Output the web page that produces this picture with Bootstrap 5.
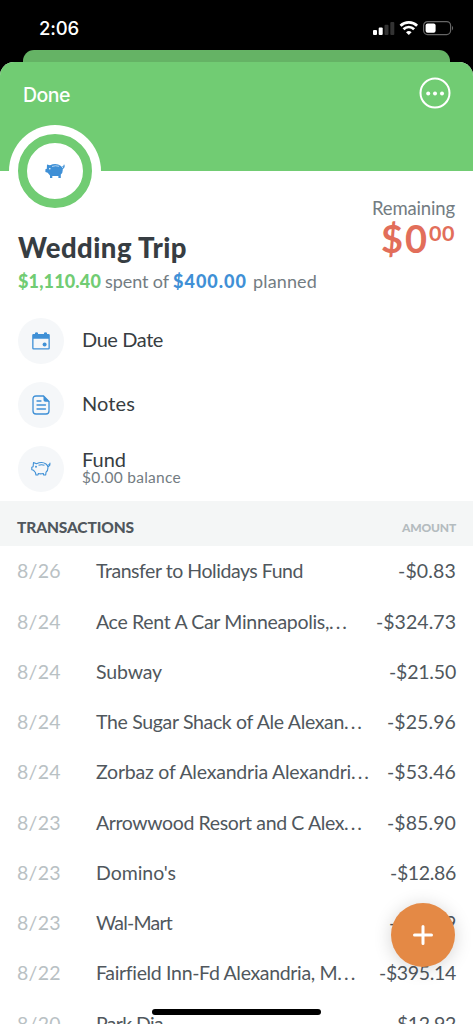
<!DOCTYPE html>
<html lang="en">
<head>
<meta charset="utf-8">
<meta name="viewport" content="width=device-width, initial-scale=1">
<title>Wedding Trip</title>
<link href="https://cdn.jsdelivr.net/npm/bootstrap@5.3.0/dist/css/bootstrap.min.css" rel="stylesheet">
<style>
html,body{height:1024px;overflow:hidden}
body{background:#000;font-family:Lato,"Open Sans",sans-serif;color:#373d42;line-height:1}
.phone{height:1024px;width:473px}
.status{height:50px;padding:7px 19px 0 39px;font-family:Inter,sans-serif;font-weight:500;font-size:18.5px}
.clock{margin-top:12px}
.signals{margin-top:13px}
.peek{height:12px;margin:0 23px;background:#65b365;border-radius:11px 11px 0 0}
.sheet{height:962px;border-radius:14px 14px 0 0}
.top{height:109px;background:#71cc73;padding:15px 22px 0 23px}
.done{font-family:Inter,sans-serif;font-weight:500;font-size:19.5px;line-height:36px}
.ring{width:92px;height:92px;margin:-46px 0 0 9px;background:#fff}
.ring>div{width:74px;height:74px;border:9px solid #71cc73}
.summary{height:84px;padding:0 18px 0 18px}
.title{font-size:27.5px;font-weight:900;line-height:30px;margin-top:16px;white-space:nowrap}
.sub{font-size:18px;line-height:24px;color:#737c82;margin-top:6px;white-space:nowrap}
.sub b{font-weight:900}
.sub .plan{margin-left:2px}
.grn{color:#71cc73}.blu{color:#3f90d6}
.remain{color:#737c82;font-size:18.5px;margin-top:-18px}
.zero{color:#e26e5a;font-weight:700;font-size:38px;line-height:38px;margin-top:1px}
.zero span{font-size:21.5px;line-height:22px;margin-top:3px}
.facts{height:200px;padding:17px 18px 0}
.fact{height:46px;margin-bottom:18px;font-size:20px}
.fact>.fit{margin-top:-4px}
.fund{margin-top:-5px}
.disc{width:46px;height:46px;background:#f5f7f9;margin-right:18px}
.fact small{font-size:15.5px;color:#737c82;line-height:16px}
.head{height:45px;background:#f4f6f6;padding:8px 17px 0;color:#50575d;font-weight:900;font-size:15.5px}
.head .amt{font-size:12px;font-weight:900;color:#b4bcbf;margin-top:1px}
.tx{height:50.25px;padding:0 17px;font-size:19.5px;color:#50575d;white-space:nowrap}
.tx .date{width:79px;color:#b9c1c4}
.fab{left:391px;top:903px;width:64px;height:64px;background:#e48945;box-shadow:0 2px 18px rgba(0,0,0,.17)}
.home{left:152px;top:1009px;width:169px;height:6px;background:#000}
.fit{display:inline-block}
</style>
</head>
<body>
<div class="phone position-relative overflow-hidden">
  <div class="status d-flex justify-content-between text-white">
    <div class="clock"><span class="fit" data-w="40">2:06</span></div>
    <svg class="signals" width="82" height="16" viewBox="0 0 82 16" fill="#fff">
      <rect x="1" y="10" width="4" height="5" rx="1"/><rect x="6.7" y="7.5" width="4" height="7.5" rx="1"/>
      <rect x="12.5" y="4.7" width="4" height="10.3" rx="1" fill="#333"/><rect x="18.3" y="2" width="4" height="13" rx="1" fill="#333"/>
      <g fill="none" stroke="#fff" stroke-width="2.7"><path d="M28.500 5.800a12 12 0 0 1 16.600 0"/><path d="M31.500 9.200a7.500 7.500 0 0 1 10.600 0"/></g>
      <path d="M34 12.200q2.800-2.200 5.600 0L36.800 15z"/>
      <rect x="51.6" y="1.6" width="27" height="13" rx="4" fill="none" stroke="#666" stroke-width="1.2"/><rect x="53.6" y="3.5" width="10" height="9.2" rx="2"/><path d="M80 5.800q2.300 2.300 0 4.600z" fill="#666"/>
    </svg>
  </div>
  <div class="peek"></div>
  <main class="sheet bg-white overflow-hidden">
    <header class="top d-flex justify-content-between text-white">
      <span class="done"><span class="fit" data-w="47">Done</span></span>
      <svg width="32" height="32" viewBox="0 0 32 32" fill="#fff"><circle cx="16" cy="16" r="14.5" fill="none" stroke="#fff" stroke-width="2"/><circle cx="9.2" cy="16.5" r="2"/><circle cx="16" cy="16.5" r="2"/><circle cx="23" cy="16.5" r="2"/></svg>
    </header>
    <div class="ring rounded-circle d-flex align-items-center justify-content-center">
      <div class="rounded-circle d-flex align-items-center justify-content-center">
        <svg width="20" height="16" viewBox="0 0 20 16"><path fill="#3f90d6" d="M2 1.500 5 2.300Q11-.6 16 3q1.500 1.200 1.700 3.300Q18 10 15.800 11.500V15h-2.400v-2H7.300v2H5v-2.500L2.700 9.800.4 9V6.300l1.400-.6z"/><path fill="none" stroke="#3f90d6" stroke-width="1.1" d="M17 6q3-1.500 1.800-4.200M17.400 3.500l2 .7"/><path fill="none" stroke="#fff" stroke-width=".6" d="M7 3.500q3.500-1.400 7-.2"/><circle cx="4.8" cy="5.7" r=".8" fill="#fff"/></svg>
      </div>
    </div>
    <section class="summary d-flex justify-content-between">
      <div>
        <h1 class="title mb-0"><span class="fit" data-w="169">Wedding Trip</span></h1>
        <div class="sub d-flex"><b class="grn fit me-1" data-w="83">$1,110.40</b><span class="fit" data-w="64">spent of</span><b class="blu fit mx-1" data-w="74">$400.00</b><span class="plan fit" data-w="64">planned</span></div>
      </div>
      <div class="remain d-flex flex-column align-items-end"><span class="fit" data-w="83">Remaining</span>
        <div class="zero d-flex"><div class="fit" data-w="48">$0</div><span class="fit" data-w="26">00</span></div>
      </div>
    </section>
    <section class="facts">
      <div class="fact d-flex align-items-center"><div class="disc rounded-circle d-flex align-items-center justify-content-center">
        <svg width="18" height="18" viewBox="0 0 18 18"><path fill="#3f90d6" fill-rule="evenodd" d="M1.500 2H3V.7Q4.500-.3 6 .7V2h6V.7q1.500-1 3 0V2h1.500q1.300 0 1.300 1.300v13q0 1.200-1.300 1.200h-15Q.2 17.500.2 16.300v-13Q.2 2 1.500 2m0 4.700v9.500h15V6.700z"/><circle cx="12.6" cy="12.5" r="2" fill="#3f90d6"/></svg></div><span class="fit" data-w="81">Due Date</span></div>
      <div class="fact d-flex align-items-center"><div class="disc rounded-circle d-flex align-items-center justify-content-center">
        <svg width="18" height="20" viewBox="0 0 18 20"><path d="M11.500 1H4Q1 1 1 4v12q0 3 3 3h10q3 0 3-3V6.500zM5 6h4M5 10h8.500M5 14h8.500" fill="none" stroke="#3f90d6" stroke-width="1.3" stroke-linecap="round"/><path d="M11.500.7V5q0 1.800 1.800 1.800h4.200z" fill="#3f90d6"/></svg></div><span class="fit" data-w="53">Notes</span></div>
      <div class="fact d-flex align-items-center"><div class="disc rounded-circle d-flex align-items-center justify-content-center">
        <svg width="20" height="16" viewBox="0 0 20 16" fill="none" stroke="#3f90d6" stroke-width="1.1" stroke-linejoin="round"><path d="m2.500 1.600 3 1.200Q11 .2 15 3q2 1.400 2 3.600 0 3.200-2 4.700l-.3 2.700h-2l-.4-1.500q-2.800.8-5 0L7 14H5l-.6-2.500L2.600 9.300.8 8.700V6.300l1.300-.5zM16.700 6q3-1.500 2-4.200M17.300 3.600l2 .6M7.500 4.200q3-1 6 0"/><circle cx="5" cy="5.8" r=".4"/></svg></div><div class="fund d-flex flex-column align-items-start"><span class="fit" data-w="44">Fund</span><small class="fit" data-w="99">$0.00 balance</small></div></div>
    </section>
    <div class="head d-flex justify-content-between align-items-center"><span class="fit" data-w="117">TRANSACTIONS</span><span class="amt fit" data-w="54">AMOUNT</span></div>
    <section id="rows"></section>
  </main>
  <button class="fab position-absolute border-0 rounded-circle p-0 d-flex align-items-center justify-content-center" aria-label="Add"><svg width="20" height="20" stroke="#fff" stroke-width="3" stroke-linecap="round"><path d="M10 1.500v17M1.500 10h17"/></svg></button>
  <div class="home position-absolute rounded-pill"></div>
</div>
<script src="https://cdn.jsdelivr.net/npm/bootstrap@5.3.0/dist/js/bootstrap.bundle.min.js"></script>
<script>
const rows=[["8/26","Transfer to Holidays Fund",207,"-$0.83",58],["8/24","Ace Rent A Car Minneapolis,...",253,"-$324.73",80],["8/24","Subway",66,"-$21.50",67],["8/24","The Sugar Shack of Ale Alexan...",268,"-$25.96",69],["8/24","Zorbaz of Alexandria Alexandri...",275,"-$53.46",69],["8/23","Arrowwood Resort and C Alex...",268,"-$85.90",69],["8/23","Domino's",80,"-$12.86",66],["8/23","Wal-Mart",76,"-$32.19",67],["8/22","Fairfield Inn-Fd Alexandria, M...",261,"-$395.14",77],["8/20","Park Dia",67,"-$12.92",66]];
const label=(t,w)=>t.endsWith('...')?`<span class="text-nowrap"><span class="fit" data-w="${w-20}">${t.slice(0,-3)}</span><span class="fit" data-w="20">...</span></span>`:`<span class="fit" data-w="${w}">${t}</span>`;
document.getElementById('rows').innerHTML=rows.map(r=>`<div class="tx d-flex align-items-center"><span class="date"><span class="fit" data-w="44">${r[0]}</span></span>${label(r[1],r[2])}<span class="ms-auto"><span class="fit" data-w="${r[4]}">${r[3]}</span></span></div>`).join('');
document.querySelectorAll('.fit').forEach(e=>{const n=e.textContent.length,d=(e.dataset.w-e.getBoundingClientRect().width)/n;e.style.letterSpacing=d+'px'});
</script>
</body>
</html>
